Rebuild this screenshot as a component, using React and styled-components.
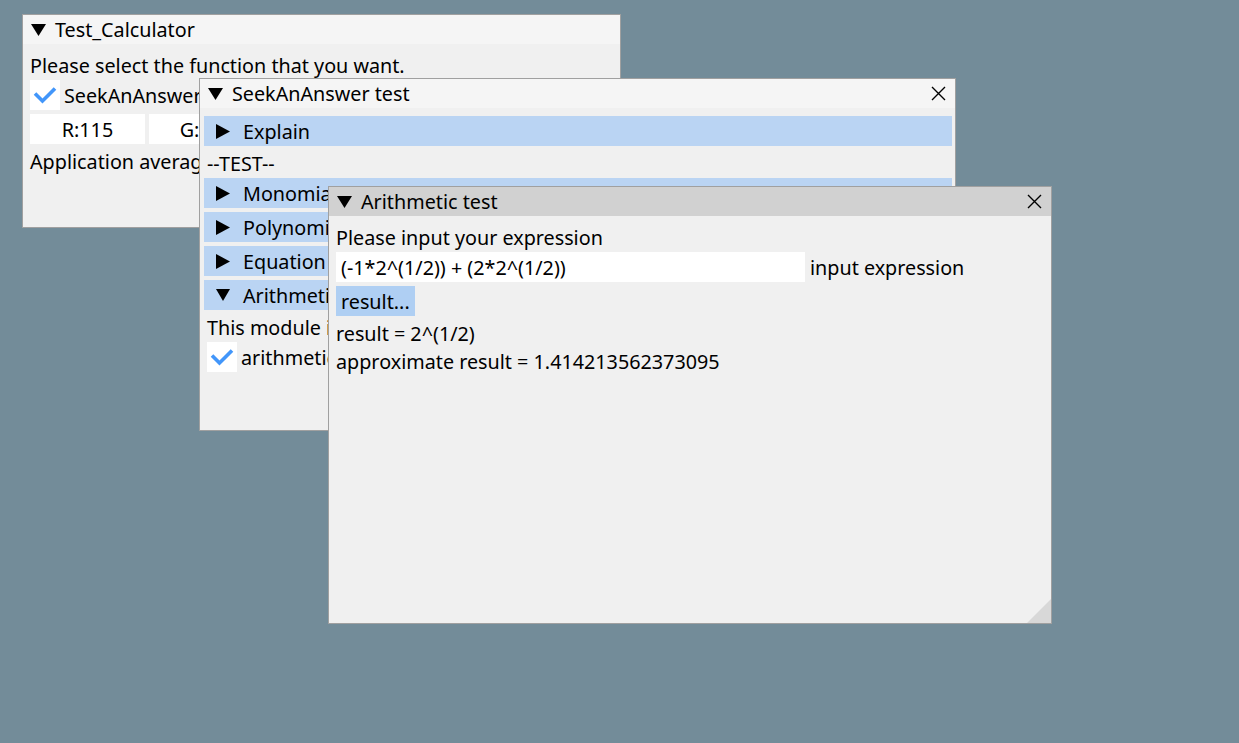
import React from 'react';
import styled, { createGlobalStyle } from 'styled-components';

const GlobalStyle = createGlobalStyle`
  html, body {
    margin: 0;
    padding: 0;
  }
  body {
    background: #738c99;
    font-family: 'Noto Sans', 'DejaVu Sans', sans-serif;
    font-size: 19.75px;
    color: #000;
  }
`;

const Desktop = styled.div`
  position: relative;
  width: 1239px;
  height: 743px;
  overflow: hidden;
  background: #738c99;
`;

// windows sit on a free canvas, so their place is part of the content
const Win = styled.div`
  position: absolute;
  left: ${(p) => p.$x}px;
  top: ${(p) => p.$y}px;
  width: ${(p) => p.$w}px;
  height: ${(p) => p.$h}px;
  box-sizing: border-box;
  border: 1px solid #a0a0a0;
  background: #f0f0f0;
  overflow: hidden;
  display: flex;
  flex-direction: column;
`;

const TitleBar = styled.div`
  flex: 0 0 29px;
  display: flex;
  align-items: center;
  gap: 9px;
  padding: 0 8px;
  background: ${(p) => (p.$active ? '#d1d1d1' : '#f5f5f5')};
  white-space: nowrap;
`;

const TitleText = styled.span`
  line-height: 24px;
  flex: 1;
`;

const Body = styled.div`
  flex: 1;
  display: flex;
  flex-direction: column;
  align-items: flex-start;
  gap: 4px;
  padding: 8px 7px;
  min-width: 0;
`;

const Text = styled.div`
  height: 24px;
  line-height: 24px;
  padding-top: 2px;
  box-sizing: border-box;
  white-space: nowrap;
`;

const Row = styled.div`
  display: flex;
  align-items: center;
  gap: ${(p) => p.$gap || 4}px;
  white-space: nowrap;
`;

const Header = styled.div`
  align-self: stretch;
  height: 30px;
  margin: 0 -4px 0 -3px;
  display: flex;
  align-items: center;
  gap: 13px;
  padding-left: 12px;
  background: #bad4f3;
  white-space: nowrap;
`;

const Box = styled.div`
  width: 30px;
  height: 30px;
  background: #fff;
  display: flex;
  align-items: center;
  justify-content: center;
  flex-shrink: 0;
`;

const Field = styled.div`
  width: ${(p) => p.$w}px;
  height: 30px;
  background: #fff;
  display: flex;
  align-items: center;
  justify-content: ${(p) => (p.$center ? 'center' : 'flex-start')};
  padding: 0 5px;
  box-sizing: border-box;
  flex-shrink: 0;
  white-space: nowrap;
  overflow: hidden;
`;

const Button = styled.div`
  height: 30px;
  display: flex;
  align-items: center;
  padding: 0 5px;
  background: #afcff3;
  white-space: nowrap;
`;

const CloseBtn = styled.svg`
  flex-shrink: 0;
  margin-right: 1px;
`;

const Grip = styled.svg`
  position: absolute;
  right: 0;
  bottom: 0;
`;

const DownArrow = ({ w = 15, h = 12 }) => (
  <svg width={w} height={h} viewBox={`0 0 ${w} ${h}`}>
    <polygon points={`0,0 ${w},0 ${w / 2},${h}`} fill="#000" />
  </svg>
);

const RightArrow = () => (
  <svg width="14" height="15" viewBox="0 0 14 15">
    <polygon points="0,0 14,7.5 0,15" fill="#000" />
  </svg>
);

const Close = () => (
  <CloseBtn width="15" height="15" viewBox="0 0 15 15">
    <path d="M1 1 L14 14 M14 1 L1 14" stroke="#000" strokeWidth="1.4" />
  </CloseBtn>
);

const Check = () => (
  <svg width="30" height="30" viewBox="0 0 30 30">
    <path d="M5 13.5 L12.5 21 L25 8.5" fill="none" stroke="#4296fa" strokeWidth="3.6" />
  </svg>
);

const Checkbox = ({ label }) => (
  <Row>
    <Box>
      <Check />
    </Box>
    <span>{label}</span>
  </Row>
);

function CalculatorWindow() {
  return (
    <Win $x={22} $y={14} $w={599} $h={214}>
      <TitleBar>
        <DownArrow />
        <TitleText>Test_Calculator</TitleText>
      </TitleBar>
      <Body>
        <Text>Please select the function that you want.</Text>
        <Checkbox label="SeekAnAnswer" />
        <Row>
          <Field $w={115} $center>R:115</Field>
          <Field $w={115} $center>G:140</Field>
          <Field $w={115} $center>B:153</Field>
          <Field $w={115} $center>A:255</Field>
        </Row>
        <Text>Application average 16.667 ms/frame (60.0 FPS)</Text>
      </Body>
    </Win>
  );
}

const sections = ['Monomial', 'Polynomial', 'Equation'];

function SeekWindow() {
  return (
    <Win $x={199} $y={78} $w={757} $h={353}>
      <TitleBar>
        <DownArrow />
        <TitleText>SeekAnAnswer test</TitleText>
        <Close />
      </TitleBar>
      <Body>
        <Header>
          <RightArrow />
          <span>Explain</span>
        </Header>
        <Text>--TEST--</Text>
        {sections.map((s) => (
          <Header key={s}>
            <RightArrow />
            <span>{s}</span>
          </Header>
        ))}
        <Header>
          <DownArrow w={14} h={12} />
          <span>Arithmetic</span>
        </Header>
        <Text>This module is used to evaluate arithmetic expressions.</Text>
        <Checkbox label="arithmetic test" />
      </Body>
    </Win>
  );
}

function ArithmeticWindow() {
  return (
    <Win $x={328} $y={186} $w={724} $h={438}>
      <TitleBar $active>
        <DownArrow />
        <TitleText>Arithmetic test</TitleText>
        <Close />
      </TitleBar>
      <Body>
        <Text>Please input your expression</Text>
        <Row $gap={5}>
          <Field $w={469}>(-1*2^(1/2)) + (2*2^(1/2))</Field>
          <span>input expression</span>
        </Row>
        <Button>result...</Button>
        <Text>result = 2^(1/2)</Text>
        <Text>approximate result = 1.414213562373095</Text>
      </Body>
      <Grip width="24" height="24" viewBox="0 0 24 24">
        <polygon points="24,0 24,24 0,24" fill="#d8d8d8" />
      </Grip>
    </Win>
  );
}

export default function App() {
  return (
    <>
      <GlobalStyle />
      <Desktop>
        <CalculatorWindow />
        <SeekWindow />
        <ArithmeticWindow />
      </Desktop>
    </>
  );
}
